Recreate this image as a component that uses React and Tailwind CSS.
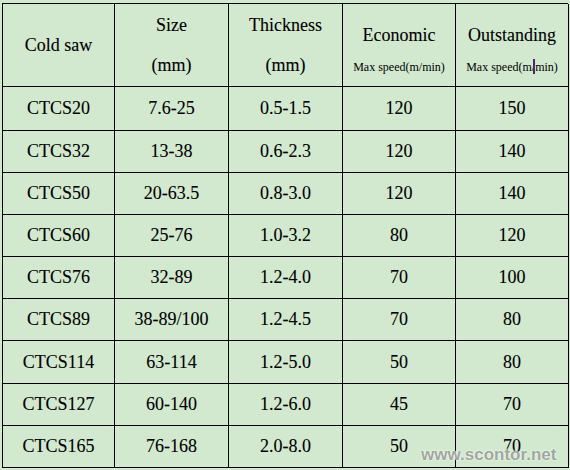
import React from "react";

const rows = [
    ["CTCS20", "7.6-25", "0.5-1.5", "120", "150"],
    ["CTCS32", "13-38", "0.6-2.3", "120", "140"],
    ["CTCS50", "20-63.5", "0.8-3.0", "120", "140"],
    ["CTCS60", "25-76", "1.0-3.2", "80", "120"],
    ["CTCS76", "32-89", "1.2-4.0", "70", "100"],
    ["CTCS89", "38-89/100", "1.2-4.5", "70", "80"],
    ["CTCS114", "63-114", "1.2-5.0", "50", "80"],
    ["CTCS127", "60-140", "1.2-6.0", "45", "70"],
    ["CTCS165", "76-168", "2.0-8.0", "50", "70"],
];

const cell = "flex items-center justify-center border-r border-b border-black";

const App = () => {
    return (
        <div className="relative h-[470px] w-[570px] overflow-hidden bg-[#d2e9cf] pl-[2px] pt-[3px] font-['Liberation_Serif','Times_New_Roman','DejaVu_Serif',serif] text-[18px] text-black [-webkit-text-stroke:0.1px_black]">
            <div className="grid w-[566px] grid-cols-[112px_114px_114px_113px_113px] grid-rows-[83px_44px_42px_42px_42px_42px_42px_43px_42px_42px] border-l border-t border-black">
                {/* header */}
                <div className={cell}>Cold saw</div>
                <div className={`${cell} flex-col leading-[40px]`}>
                    <div>Size</div>
                    <div>(mm)</div>
                </div>
                <div className={`${cell} flex-col leading-[40px]`}>
                    <div>Thickness</div>
                    <div>(mm)</div>
                </div>
                <div className={`${cell} flex-col pt-[12px] leading-[32px]`}>
                    <div>Economic</div>
                    <div className="text-[12px] [-webkit-text-stroke:0px]">Max speed(m/min)</div>
                </div>
                <div className={`${cell} flex-col pt-[12px] leading-[32px]`}>
                    <div>Outstanding</div>
                    <div className="text-[12px] [-webkit-text-stroke:0px]">
                        Max speed(m
                        <span className="relative">
                            /<span className="absolute left-[1px] top-[-1px] h-[15px] w-[2px] bg-[#4a2c6a]" />
                        </span>
                        min)
                    </div>
                </div>

                {rows.map((r) =>
                    r.map((v, i) => (
                        <div key={r[0] + i} className={cell}>
                            {v}
                        </div>
                    ))
                )}
            </div>

            {/* watermark */}
            <div className="absolute left-[421px] top-[445px] font-['Liberation_Sans',Arial,sans-serif] text-[17px] leading-[20px] font-bold text-[#9ea79d] [-webkit-text-stroke:0px] [text-shadow:0_0_2px_#fff,0_0_1px_#fff]">
                www.scontor.net
            </div>
        </div>
    );
};

export default App;
